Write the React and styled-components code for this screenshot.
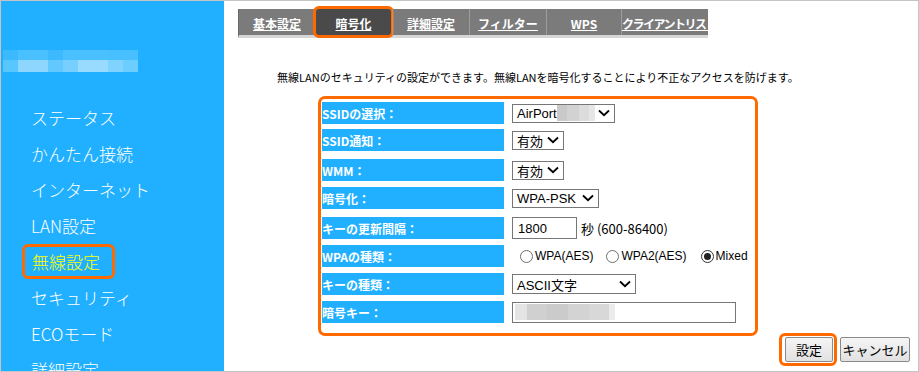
import React from 'react';
import styled, { createGlobalStyle } from 'styled-components';

const GlobalStyle = createGlobalStyle`
  html, body {
    margin: 0;
    padding: 0;
    background: #fff;
  }
  body {
    font-family: "Noto Sans CJK JP", "Liberation Sans", sans-serif;
  }
`;

const ORANGE = '#ff6a00';
const BLUE = '#20b0ff';

const menu = ['ステータス', 'かんたん接続', 'インターネット', 'LAN設定', '無線設定', 'セキュリティ', 'ECOモード', '詳細設定'];

const tabs = [
  { label: '基本設定', width: 76 },
  { label: '暗号化', width: 77, active: true },
  { label: '詳細設定', width: 77 },
  { label: 'フィルター', width: 77 },
  { label: 'WPS', width: 75 },
  { label: 'クライアントリスト', width: 87, clip: true },
];

const logoTop = ['#3dbaff', '#4bc0ff', '#4bc0ff', '#3dbaff', '#4bc0ff', '#4bc0ff', '#4bc0ff', '#48bfff', '#48bfff'];
const logoBottom = ['#58c6ff', '#8fd6ff', '#8fd6ff', '#62c9ff', '#76cfff', '#99dbff', '#99dbff', '#80d3ff', '#6ccdff'];

// ---------- frame ----------
const Frame = styled.div`
  width: 919px;
  height: 372px;
  box-sizing: border-box;
  border: 1px solid #c4c4c4;
  display: flex;
  overflow: hidden;
`;

// ---------- sidebar ----------
const Sidebar = styled.nav`
  width: 223px;
  flex-shrink: 0;
  background: ${BLUE};
  overflow: hidden;
  padding-top: 49px;
  box-sizing: border-box;
`;

const Logo = styled.div`
  display: grid;
  grid-template-columns: repeat(9, 15px);
  grid-template-rows: 10px 12px;
  margin-left: 2px;
`;

const LogoCell = styled.span`
  background: ${(p) => p.$c};
`;

const MenuList = styled.ul`
  list-style: none;
  margin: 27px 0 0;
  padding: 0;
`;

const MenuItem = styled.li`
  height: 36px;
  display: flex;
  align-items: center;
  padding-left: 30px;
  font-size: 17px;
  font-weight: 300;
  color: #fff;
  white-space: nowrap;
`;

const ActiveLabel = styled.span`
  display: inline-flex;
  align-items: center;
  height: 35px;
  box-sizing: border-box;
  margin-left: -9px;
  padding: 0 12px 0 7px;
  border: 3px solid ${ORANGE};
  border-radius: 6px;
  color: #ffff00;
`;

// ---------- main ----------
const Main = styled.main`
  flex: 1;
  padding: 8px 8px 0 14px;
  box-sizing: border-box;
`;

const TabBar = styled.div`
  display: flex;
  width: 469px;
  height: 26px;
  background: #7b7b7b;
  border-bottom: 3px solid #d6d6d6;
  border-left: 1px solid #6a6a6a;
  box-sizing: content-box;
`;

const Tab = styled.div`
  position: relative;
  width: ${(p) => p.$w}px;
  flex-shrink: 0;
  display: flex;
  align-items: center;
  justify-content: ${(p) => (p.$clip ? 'flex-start' : 'center')};
  padding-top: 2px;
  box-sizing: border-box;
  background: ${(p) => (p.$active ? '#4a4a4a' : 'transparent')};
  border-left: ${(p) => (p.$active ? 'none' : '1px solid #9c9c9c')};
  overflow: ${(p) => (p.$clip ? 'hidden' : 'visible')};
  color: #fff;
  font-size: 12px;
  font-weight: bold;
  text-decoration: underline;
  white-space: nowrap;
  letter-spacing: ${(p) => (p.$clip ? '-1.5px' : '0')};

  &:first-child {
    border-left: none;
  }

  ${(p) =>
    p.$active &&
    `
    &::after {
      content: '';
      position: absolute;
      inset: -3px -2px -3px -2px;
      border: 3px solid ${ORANGE};
      border-radius: 6px;
    }
  `}
`;

const Description = styled.p`
  margin: 33px 0 0 39px;
  font-size: 11px;
  line-height: 13px;
  color: #000;
  white-space: nowrap;
`;

const FormBox = styled.section`
  margin: 12px 0 0 80px;
  width: 440px;
  height: 240px;
  box-sizing: border-box;
  border: 3px solid ${ORANGE};
  border-radius: 7px;
  padding: 3px 0 0 1px;
`;

const Row = styled.div`
  display: flex;
  gap: 8px;
  height: 22px;
  margin-top: ${(p) => p.$mt}px;
`;

const Label = styled.div`
  width: 182px;
  flex-shrink: 0;
  background: ${BLUE};
  color: #fff;
  font-size: 12px;
  font-weight: bold;
  display: flex;
  align-items: center;
  white-space: nowrap;
`;

const Control = styled.div`
  display: flex;
  align-items: center;
  padding-left: ${(p) => p.$pl || 0}px;
  font-family: "Liberation Sans", "Noto Sans CJK JP", sans-serif;
  font-size: 13px;
  color: #000;
`;

const SelectBox = styled.div`
  display: flex;
  align-items: center;
  justify-content: space-between;
  width: ${(p) => p.$w}px;
  height: ${(p) => p.$h || 19}px;
  box-sizing: border-box;
  border: 1px solid #767676;
  background: #fff;
  padding: 0 4px 0 4px;
`;

const SelectValue = styled.span`
  display: flex;
  align-items: center;
  white-space: nowrap;
`;

const Mosaic = styled.span`
  display: inline-flex;
  height: ${(p) => p.$h}px;
`;

const MosaicCell = styled.span`
  width: ${(p) => p.$w}px;
  background: ${(p) => p.$c};
`;

const TextBox = styled.input`
  width: ${(p) => p.$w}px;
  height: 22px;
  box-sizing: border-box;
  border: 1px solid #767676;
  padding: 0 5px;
  font: inherit;
  color: #000;
  outline: none;
`;

const FieldBox = styled.div`
  width: 224px;
  height: 21px;
  box-sizing: border-box;
  border: 1px solid #767676;
  display: flex;
  align-items: center;
  padding-left: 2px;
`;

const RadioOption = styled.label`
  display: inline-flex;
  align-items: center;
  gap: 2px;
  font-size: 12px;
  margin-right: ${(p) => p.$mr}px;
  white-space: nowrap;
`;

const RadioCircle = styled.span`
  width: 13px;
  height: 13px;
  box-sizing: border-box;
  border-radius: 50%;
  border: 1px solid ${(p) => (p.$on ? '#333' : '#6f6f6f')};
  background: #fff;
  display: inline-flex;
  align-items: center;
  justify-content: center;

  &::after {
    content: '';
    width: 7px;
    height: 7px;
    border-radius: 50%;
    background: ${(p) => (p.$on ? '#222' : 'transparent')};
  }
`;

const Unit = styled.span`
  margin-left: 4px;
  font-size: 13px;
  font-family: "Noto Sans CJK JP", sans-serif;
`;

const ButtonRow = styled.div`
  display: flex;
  justify-content: flex-end;
  gap: 7px;
  margin-top: 1px;
`;

const Button = styled.button`
  position: relative;
  height: 25px;
  width: ${(p) => p.$w}px;
  box-sizing: border-box;
  border: 1px solid #8a8a8a;
  border-radius: 2px;
  background: linear-gradient(#f5f5f5, #e1e1e1);
  font-family: "Noto Sans CJK JP", sans-serif;
  font-size: 13px;
  color: #000;
  padding: 0;

  ${(p) =>
    p.$mark &&
    `
    &::after {
      content: '';
      position: absolute;
      inset: -5px -5px -5px -7px;
      border: 3px solid ${ORANGE};
      border-radius: 6px;
    }
  `}
`;

const Chevron = () => (
  <svg width="12" height="8" viewBox="0 0 12 8">
    <path d="M1 1.5 L6 6.2 L11 1.5" fill="none" stroke="#000" strokeWidth="1.8" />
  </svg>
);

const Select = ({ width, height, children }) => (
  <SelectBox $w={width} $h={height}>
    <SelectValue>{children}</SelectValue>
    <Chevron />
  </SelectBox>
);

const Radio = ({ on, mr, children }) => (
  <RadioOption $mr={mr}>
    <RadioCircle $on={on} />
    {children}
  </RadioOption>
);

const ssidBlur = [
  { w: 10, c: '#c9c9c9' },
  { w: 12, c: '#d2d2d2' },
  { w: 10, c: '#dcdcdc' },
  { w: 6, c: '#e6e6e6' },
];

const keyBlur = [
  { w: 12, c: '#e4e4e4' },
  { w: 20, c: '#d0d0d0' },
  { w: 21, c: '#cbcbcb' },
  { w: 21, c: '#d3d3d3' },
  { w: 20, c: '#d8d8d8' },
  { w: 6, c: '#ececec' },
];

const App = () => (
  <>
    <GlobalStyle />
    <Frame>
      <Sidebar>
        <Logo>
          {logoTop.map((c, i) => (
            <LogoCell key={'t' + i} $c={c} />
          ))}
          {logoBottom.map((c, i) => (
            <LogoCell key={'b' + i} $c={c} />
          ))}
        </Logo>
        <MenuList>
          {menu.map((m) => (
            <MenuItem key={m}>{m === '無線設定' ? <ActiveLabel>{m}</ActiveLabel> : m}</MenuItem>
          ))}
        </MenuList>
      </Sidebar>

      <Main>
        <TabBar>
          {tabs.map((t) => (
            <Tab key={t.label} $w={t.width} $active={t.active} $clip={t.clip}>
              {t.label}
            </Tab>
          ))}
        </TabBar>

        <Description>
          無線LANのセキュリティの設定ができます。無線LANを暗号化することにより不正なアクセスを防げます。
        </Description>

        <FormBox>
          <Row $mt={0}>
            <Label>SSIDの選択：</Label>
            <Control>
              <Select width={103}>
                AirPort
                <Mosaic $h={16}>
                  {ssidBlur.map((b, i) => (
                    <MosaicCell key={i} $w={b.w} $c={b.c} />
                  ))}
                </Mosaic>
              </Select>
            </Control>
          </Row>
          <Row $mt={5}>
            <Label>SSID通知：</Label>
            <Control>
              <Select width={52}>有効</Select>
            </Control>
          </Row>
          <Row $mt={8}>
            <Label>WMM：</Label>
            <Control>
              <Select width={52}>有効</Select>
            </Control>
          </Row>
          <Row $mt={6}>
            <Label>暗号化：</Label>
            <Control>
              <Select width={87}>WPA-PSK</Select>
            </Control>
          </Row>
          <Row $mt={8}>
            <Label>キーの更新間隔：</Label>
            <Control>
              <TextBox $w={65} defaultValue="1800" readOnly />
              <Unit>秒 (600-86400)</Unit>
            </Control>
          </Row>
          <Row $mt={6}>
            <Label>WPAの種類：</Label>
            <Control $pl={8}>
              <Radio mr={13}>WPA(AES)</Radio>
              <Radio mr={14}>WPA2(AES)</Radio>
              <Radio on mr={0}>Mixed</Radio>
            </Control>
          </Row>
          <Row $mt={6}>
            <Label>キーの種類：</Label>
            <Control>
              <Select width={124} height={20}>ASCII文字</Select>
            </Control>
          </Row>
          <Row $mt={6}>
            <Label>暗号キー：</Label>
            <Control>
              <FieldBox>
                <Mosaic $h={16}>
                  {keyBlur.map((b, i) => (
                    <MosaicCell key={i} $w={b.w} $c={b.c} />
                  ))}
                </Mosaic>
              </FieldBox>
            </Control>
          </Row>
        </FormBox>

        <ButtonRow>
          <Button $w={48} $mark>
            設定
          </Button>
          <Button $w={70}>キャンセル</Button>
        </ButtonRow>
      </Main>
    </Frame>
  </>
);

export default App;
